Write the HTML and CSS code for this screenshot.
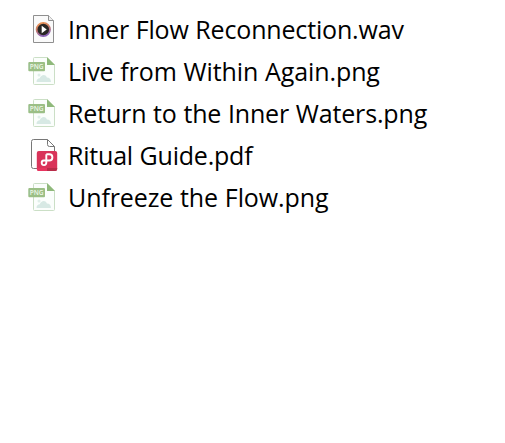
FILE: index.html
```
<!DOCTYPE html>
<html lang="en">
<head>
    <meta charset="UTF-8">
    <meta name="viewport" content="width=device-width, initial-scale=1.0">
    <title>Files</title>
    <link rel="stylesheet" href="styles.css">
</head>
<body>
    <!-- Shared icon for the PNG files -->
    <svg class="icon-defs" width="0" height="0">
        <symbol id="icon-png" viewBox="0 0 32 42">
            <path d="M7.5 8.5q0-1 1-1H21l7.500 7.500v18.500q0 1-1 1h-19q-1 0-1-1z" fill="#fbfefc" stroke="#cbdfc6"/>
            <path d="M21 7l8 8h-8z" fill="#8fb97b"/>
            <path d="M10.500 32c0-2.500 1.500-3.500 3.200-3.700 1-2.800 5.200-5.300 7.200-.8 2.800 0 4.100 2.100 4.100 4.500z" fill="#d7e9e4"/>
            <circle cx="13" cy="25" r="1.500" fill="#e0efe9"/>
            <rect x="2.300" y="12" width="16.700" height="9.300" rx="1" fill="#9bbf86"/>
            <text x="10.600" y="19.200" class="icon-label">PNG</text>
        </symbol>
    </svg>

    <ul class="file-list">
        <li class="file">
            <svg class="file-icon" viewBox="0 0 32 42">
                <defs>
                    <linearGradient id="ring" x1="0" y1="0" x2="0.300" y2="1">
                        <stop offset="0" stop-color="#f29a55"/>
                        <stop offset="0.500" stop-color="#c87b68"/>
                        <stop offset="1" stop-color="#8b63b5"/>
                    </linearGradient>
                </defs>
                <path d="M7.500 7.500h15l5 5v22h-20z" fill="#fafafa" stroke="#8f8f8f"/>
                <path d="M22.500 7.500v5h5" fill="#eee" stroke="#8f8f8f"/>
                <circle cx="17.300" cy="21.500" r="6.700" fill="#292724" stroke="url(#ring)" stroke-width="1.800"/>
                <path d="M15.700 17.800v7.400l5-3.700z" fill="#fff"/>
            </svg>
            <span class="file-name name-flow">Inner Flow Reconnection.wav</span>
        </li>
        <li class="file">
            <svg class="file-icon"><use href="#icon-png"/></svg>
            <span class="file-name name-live">Live from Within Again.png</span>
        </li>
        <li class="file">
            <svg class="file-icon"><use href="#icon-png"/></svg>
            <span class="file-name name-return">Return to the Inner Waters.png</span>
        </li>
        <li class="file">
            <svg class="file-icon" viewBox="0 0 32 42">
                <path d="M7.500 5.500h14l7 7v20q0 2-2 2h-19q-2 0-2-2v-25q0-2 2-2z" fill="#fff" stroke="#777"/>
                <path d="M21.500 5.500v5q0 2 2 2h5" fill="none" stroke="#777"/>
                <rect x="10.800" y="17" width="20.400" height="20" rx="2" fill="#d9345a"/>
                <path d="M10.800 34h10.200v3h-8q-2.200 0-2.200-2z" fill="#e8355f"/>
                <path d="M21 34h10.200v1q0 2-2.200 2h-8z" fill="#b72d49"/>
                <path d="M20.300 20.300h3a3.100 3.100 0 0 1 0 6.200h-5.600a2.300 2.300 0 1 0 2.600 2.300v-8.500" fill="none" stroke="#fff" stroke-width="1.900"/>
            </svg>
            <span class="file-name name-ritual">Ritual Guide.pdf</span>
        </li>
        <li class="file">
            <svg class="file-icon"><use href="#icon-png"/></svg>
            <span class="file-name name-unfreeze">Unfreeze the Flow.png</span>
        </li>
    </ul>
</body>
</html>
```
FILE: styles.css
```
* {
    box-sizing: border-box;
    margin: 0;
    padding: 0;
}

body {
    background-color: #fff;
    color: #000;
    font-family: 'Segoe UI', 'Open Sans', 'Noto Sans', sans-serif;
}

.icon-defs {
    display: none;
}

.icon-label {
    fill: #eff7e9;
    font-family: 'Open Sans', sans-serif;
    font-size: 6.5px;
    font-weight: 600;
    text-anchor: middle;
}

.file-list {
    list-style: none;
    padding: 8px 0 0 26px;
}

.file {
    display: flex;
    align-items: center;
    gap: 10px;
    height: 42px;
}

.file-icon {
    flex: none;
    width: 32px;
    height: 42px;
}

.file-name {
    font-size: 25px;
    line-height: 42px;
    white-space: nowrap;
    word-spacing: 0.35px;
}

.name-flow {
    letter-spacing: -0.17px;
}

.name-live {
    letter-spacing: -0.09px;
}

.name-return {
    letter-spacing: -0.15px;
}

.name-ritual {
    letter-spacing: -0.21px;
}

.name-unfreeze {
    letter-spacing: -0.09px;
}
```
